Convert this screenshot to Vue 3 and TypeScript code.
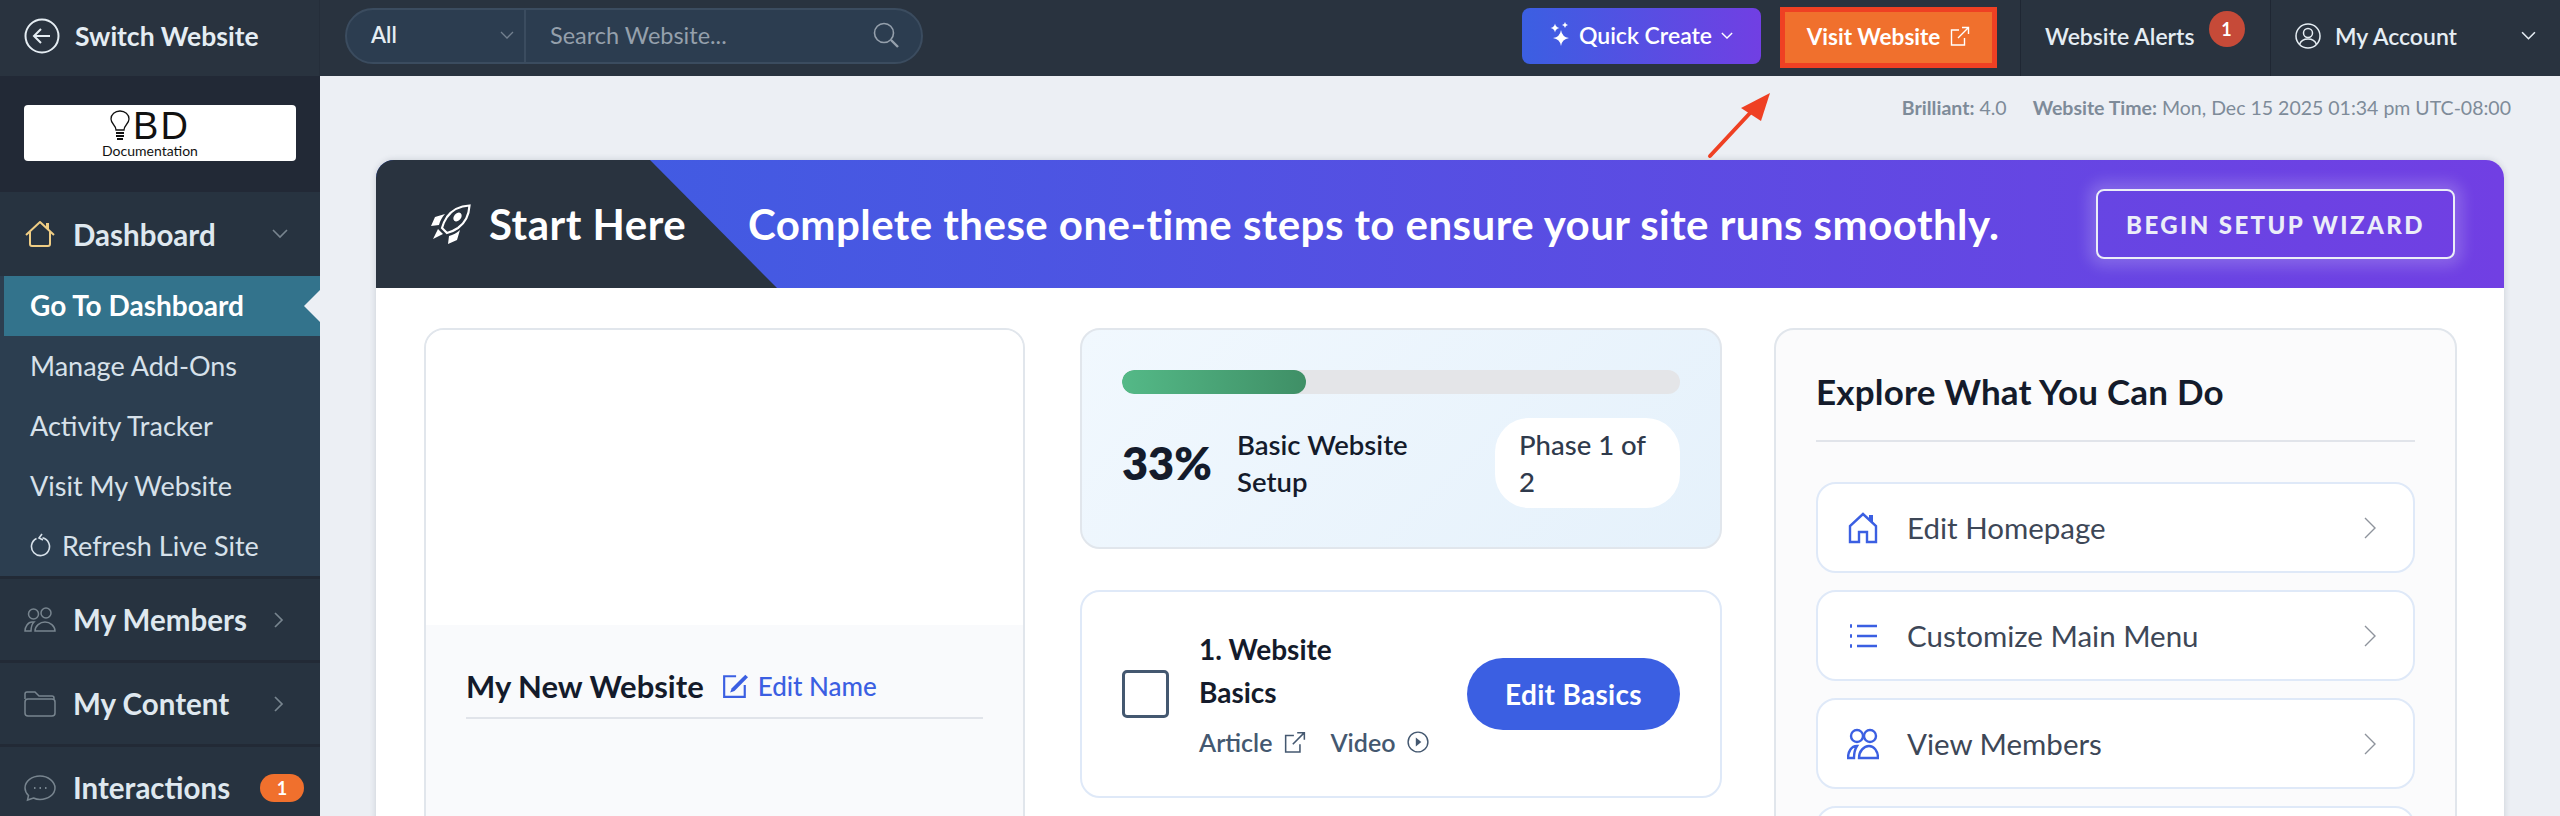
<script setup lang="ts">
interface SideGroup {
  label: string
  icon: string
  badge?: string
}

const subLinks = ['Manage Add-Ons', 'Activity Tracker', 'Visit My Website']
const groups: SideGroup[] = [
  { label: 'My Members', icon: 'members' },
  { label: 'My Content', icon: 'folder' },
  { label: 'Interactions', icon: 'chat', badge: '1' }
]
const explore = [
  { label: 'Edit Homepage', icon: 'home' },
  { label: 'Customize Main Menu', icon: 'list' },
  { label: 'View Members', icon: 'members' }
]
</script>

<template>
  <div class="page">
    <header class="topbar">
      <div class="switch">
        <svg class="switch-icon" viewBox="0 0 36 36" fill="none" stroke="currentColor" stroke-width="2">
          <circle cx="18" cy="18" r="16.5" />
          <path d="M26 18H10M17 11l-7 7 7 7" />
        </svg>
        <span>Switch Website</span>
      </div>
      <div class="search">
        <div class="search-type">
          <span>All</span>
          <svg class="chev-sm" viewBox="0 0 14 8" fill="none" stroke="currentColor" stroke-width="1.3"><path d="M1 1l6 6 6-6" /></svg>
        </div>
        <div class="search-input">
          <span>Search Website...</span>
          <svg class="search-icon" viewBox="0 0 26 26" fill="none" stroke="currentColor" stroke-width="1.6">
            <circle cx="11" cy="11" r="9.5" />
            <path d="M18 18l7 7" stroke-width="2.4" />
          </svg>
        </div>
      </div>
      <div class="top-actions">
        <button class="quick">
          <svg class="spark" viewBox="0 0 20 26" fill="currentColor">
            <path d="M11 8q1 7 8 8-7 1-8 8-1-7-8-8 7-1 8-8z" />
            <path d="M5 1.500q.6 3.900 4.500 4.500-3.900.6-4.500 4.500-.6-3.900-4.500-4.500 3.900-.6 4.500-4.500z" />
            <path d="M15 0q.4 2.600 3 3-2.600.4-3 3-.4-2.600-3-3 2.600-.4 3-3z" />
          </svg>
          <span>Quick Create</span>
          <svg class="chev-xs" viewBox="0 0 14 8" fill="none" stroke="currentColor" stroke-width="1.6"><path d="M1 1l6 6 6-6" /></svg>
        </button>
        <div class="visit-outline">
          <button class="visit">
            <span>Visit Website</span>
            <svg class="ext" viewBox="0 0 20 20" fill="none" stroke="currentColor" stroke-width="1.4">
              <path d="M9 4H1.500v15h13v-7M8 12L18.500 1.500M12 1.500h6.500V8" />
            </svg>
          </button>
        </div>
        <div class="alerts">
          <span>Website Alerts</span>
          <span class="alert-badge">1</span>
        </div>
        <div class="account">
          <svg class="user" viewBox="0 0 26 26" fill="none" stroke="currentColor" stroke-width="1.500">
            <circle cx="13" cy="13" r="12" />
            <circle cx="13" cy="10" r="4.500" />
            <path d="M4.500 21.500c1.500-4 4.500-5.500 8.500-5.500s7 1.500 8.500 5.500" />
          </svg>
          <span>My Account</span>
          <svg class="chev-acc" viewBox="0 0 14 8" fill="none" stroke="currentColor" stroke-width="1.500"><path d="M1 1l6 6 6-6" /></svg>
        </div>
      </div>
    </header>

    <div class="body">
      <aside class="sidebar">
        <div class="logo-wrap">
          <div class="logo">
            <div class="logo-mark">
              <svg class="bulb" viewBox="0 0 20 31" fill="none" stroke="#111" stroke-width="1.300">
                <path d="M6 20c0-5-5-6-5-11a9 8 0 0 1 18 0c0 5-5 6-5 11z" />
                <path d="M6 23h8M6 26h8M7 29h6" stroke-width="1.800" />
              </svg>
              <span class="logo-bd">BD</span>
            </div>
            <span class="logo-doc">Documentation</span>
          </div>
        </div>

        <div class="side-head">
          <svg class="home-gold" viewBox="0 0 30 27" fill="none" stroke="currentColor" stroke-width="2" stroke-linejoin="round">
            <path d="M1 14L15 1l14 13M5 11v12a2 2 0 0 0 2 2h16a2 2 0 0 0 2-2V11" />
            <path d="M21 2h3v8l-3-3z" fill="currentColor" stroke="none" />
          </svg>
          <span class="side-label">Dashboard</span>
          <svg class="side-chev-down" viewBox="0 0 16 10" fill="none" stroke="currentColor" stroke-width="1.600"><path d="M1 1l7 7 7-7" /></svg>
        </div>

        <nav class="sub">
          <a class="sub-link active">Go To Dashboard</a>
          <a v-for="link in subLinks" :key="link" class="sub-link">{{ link }}</a>
          <a class="sub-link">
            <svg class="refresh" viewBox="0 0 22 24" fill="none" stroke="currentColor" stroke-width="1.600">
              <path d="M6.500 5.500a9 9 0 1 0 6-.7M12 1l-3 4 4 2" />
            </svg>
            Refresh Live Site
          </a>
        </nav>

        <div v-for="group in groups" :key="group.label" class="side-group">
          <svg class="side-icon" viewBox="0 0 32 26" fill="none" stroke="currentColor" stroke-width="1.500">
            <template v-if="group.icon === 'members'">
              <circle cx="9.500" cy="7" r="5" />
              <circle cx="22" cy="6" r="5" />
              <path d="M1 24c0-4 3-9 7-9h2c-2 2-3 6-3 9zM11 24c0-5 5-9 10-9s10 4 10 9z" />
            </template>
            <template v-else-if="group.icon === 'folder'">
              <path d="M1 8V3a2 2 0 0 1 2-2h8l4 4h13a2 2 0 0 1 2 2v1" />
              <rect x="1" y="8" width="30" height="17" rx="3" />
            </template>
            <template v-else>
              <path d="M16 1C8 1 1 6 1 13c0 3 1.500 5.500 3.500 7.500L3.500 25l6-2c2 1 4 1.500 6.500 1.500 8 0 15-5 15-11.500S24 1 16 1z" />
              <path d="M10 13h1.500M15.500 13H17M21 13h1.500" stroke-width="2.200" />
            </template>
          </svg>
          <span class="side-label">{{ group.label }}</span>
          <span v-if="group.badge" class="side-badge">{{ group.badge }}</span>
          <svg v-else class="side-chev" viewBox="0 0 10 16" fill="none" stroke="currentColor" stroke-width="1.700"><path d="M1 1l7 7-7 7" /></svg>
        </div>
      </aside>

      <main class="main">
        <svg class="arrow" viewBox="0 0 70 70" fill="#ef4023">
          <path d="M5 66L46 22" stroke="#ef4023" stroke-width="4" stroke-linecap="round" />
          <path d="M65 3L56 31 36 18z" />
        </svg>

        <div class="meta">
          <span><b>Brilliant:</b> 4.0</span>
          <span><b>Website Time:</b> Mon, Dec 15 2025 01:34 pm UTC-08:00</span>
        </div>

        <section class="panel">
          <div class="banner">
            <div class="start">
              <svg class="rocket" viewBox="0 0 40 40" fill="#fff">
                <path d="M38.500 1.500C29 2 21 6 16 13c-2 3-4 7-5 11l5 5c4-1 8-3 11-5 7-5 11-13 11.500-22.500z" fill="none" stroke="#fff" stroke-width="2.200" />
                <ellipse cx="26.500" cy="13" rx="3.500" ry="5" transform="rotate(40 26.500 13)" />
                <path d="M14 10L4 13 0 22l8-1c1-4 3-8 6-11zM29 26l-3 10-9 4 1-8c4-1 8-3 11-6zM7 25l5 5-10 5z" />
              </svg>
              <span>Start Here</span>
            </div>
            <div class="banner-text">Complete these one-time steps to ensure your site runs smoothly.</div>
            <button class="wizard">BEGIN SETUP WIZARD</button>
          </div>

          <div class="columns">
            <div class="site-card">
              <div class="site-preview"></div>
              <div class="site-info">
                <div class="site-name">
                  <strong>My New Website</strong>
                  <svg class="edit-icon" viewBox="0 0 24 24" fill="none" stroke="currentColor" stroke-width="2">
                    <path d="M13 3H2v19h19V11" />
                    <path d="M21.500 1.500L9 14l-1.500 4 4-1.500L24 4z" fill="currentColor" stroke="none" />
                  </svg>
                  <span class="edit-name">Edit Name</span>
                </div>
              </div>
            </div>

            <div class="mid">
              <div class="progress-card">
                <div class="bar"><div class="bar-fill" :style="{ width: '33%' }"></div></div>
                <div class="progress-row">
                  <span class="pct">33%</span>
                  <span class="phase-name">Basic Website Setup</span>
                  <span class="phase-pill">Phase 1 of 2</span>
                </div>
              </div>

              <div class="step-card">
                <span class="check"></span>
                <div class="step-body">
                  <div class="step-title">1. Website Basics</div>
                  <div class="step-links">
                    <span>Article</span>
                    <svg class="ext small" viewBox="0 0 20 20" fill="none" stroke="currentColor" stroke-width="1.400">
                      <path d="M9 4H1.500v15h13v-7M8 12L18.500 1.500M12 1.500h6.500V8" />
                    </svg>
                    <span class="video">Video</span>
                    <svg class="play" viewBox="0 0 20 20" fill="none" stroke="currentColor" stroke-width="1.300">
                      <circle cx="10" cy="10" r="9" />
                      <path d="M8 6l5 4-5 4z" fill="currentColor" stroke="none" />
                    </svg>
                  </div>
                </div>
                <button class="edit-basics">Edit Basics</button>
              </div>
            </div>

            <div class="explore">
              <h3>Explore What You Can Do</h3>
              <a v-for="item in explore" :key="item.label" class="explore-row">
                <svg class="explore-icon" viewBox="0 0 32 32" fill="none" stroke="currentColor" stroke-width="2.400">
                  <template v-if="item.icon === 'home'">
                    <path d="M3 30V14L16 2l13 12v16h-9V20h-8v10z" />
                    <path d="M22 3h4v9l-4-4z" fill="currentColor" stroke="none" />
                  </template>
                  <template v-else-if="item.icon === 'list'">
                    <path d="M10 6h20M10 16h20M10 26h20" />
                    <path d="M3 6h2M3 16h2M3 26h2" stroke-width="3.400" />
                  </template>
                  <template v-else>
                    <circle cx="10" cy="8" r="6" />
                    <circle cx="23" cy="8" r="6" />
                    <path d="M1 30c0-6 3-12 9-12-2 3-3 8-3 12zM12 30c0-7 5-12 10-12s9 5 9 12z" />
                  </template>
                </svg>
                <span>{{ item.label }}</span>
                <svg class="row-chev" viewBox="0 0 12 22" fill="none" stroke="currentColor" stroke-width="1.400"><path d="M1 1l10 10L1 21" /></svg>
              </a>
              <div class="explore-row"></div>
            </div>
          </div>
        </section>
      </main>
    </div>
  </div>
</template>

<style>
html,
body {
  margin: 0;
  background: #eceff4;
}
</style>

<style scoped>
* {
  box-sizing: border-box;
}

.page {
  width: 2560px;
  height: 816px;
  overflow: hidden;
  display: flex;
  flex-direction: column;
  font-family: Lato, "Open Sans", sans-serif;
  color: #141b2b;
}

button {
  border: none;
  font-family: inherit;
  color: #fff;
}

/* top bar */
.topbar {
  flex: 0 0 76px;
  display: flex;
  align-items: center;
  background: #29333f;
  color: #e5edf3;
}

.switch {
  flex: 0 0 320px;
  height: 100%;
  display: flex;
  align-items: center;
  gap: 15px;
  padding: 0 0 5px 24px;
  border-right: 1px solid #252e3a;
  font-size: 26.5px;
  font-weight: 700;
}

.switch-icon {
  width: 36px;
  height: 36px;
}

.search {
  margin: 0 0 5px 25px;
  width: 578px;
  height: 56px;
  display: flex;
  background: #2c3d50;
  border: 2px solid #3b4c5f;
  border-radius: 28px;
}

.search-type {
  flex: 0 0 179px;
  display: flex;
  align-items: center;
  justify-content: space-between;
  padding: 0 10px 2px 24px;
  border-right: 2px solid #3b4c5f;
  font-size: 22px;
  font-weight: 600;
}

.chev-sm {
  width: 14px;
  height: 8px;
  color: #73808f;
}

.search-input {
  flex: 1;
  display: flex;
  align-items: center;
  justify-content: space-between;
  padding: 0 22px 2px 24px;
  font-size: 23.5px;
  color: #95a0ac;
}

.search-icon {
  width: 26px;
  height: 26px;
}

.top-actions {
  margin-left: auto;
  height: 100%;
  display: flex;
  align-items: center;
}

.quick {
  width: 239px;
  height: 56px;
  margin-bottom: 4px;
  display: flex;
  align-items: center;
  justify-content: center;
  gap: 9px;
  padding: 0 0 2px;
  border-radius: 8px;
  background: linear-gradient(90deg, #3b5fe2, #713fe3);
  font-size: 23px;
  font-weight: 600;
}

.spark {
  width: 20px;
  height: 26px;
}

.chev-xs {
  width: 12px;
  height: 7px;
}

.visit-outline {
  margin: 0 0 1px 19px;
  width: 217px;
  height: 61px;
  padding: 5px;
  background: #ef4023;
}

.visit {
  width: 100%;
  height: 100%;
  display: flex;
  align-items: center;
  justify-content: center;
  gap: 10px;
  padding: 0 0 3px;
  background: #f0702d;
  font-size: 22.5px;
  font-weight: 700;
}

.ext {
  width: 20px;
  height: 20px;
}

.alerts {
  margin-left: 23px;
  width: 251px;
  height: 100%;
  display: flex;
  align-items: center;
  padding: 0 0 5px 24px;
  gap: 14px;
  border-left: 1px solid #1f2733;
  border-right: 1px solid #1f2733;
  font-size: 23px;
  font-weight: 600;
}

.alert-badge {
  width: 36px;
  height: 36px;
  margin-top: -13px;
  display: flex;
  align-items: center;
  justify-content: center;
  border-radius: 50%;
  background: #c64a38;
  font-size: 18px;
  font-weight: 700;
  color: #fff;
}

.account {
  width: 289px;
  height: 100%;
  display: flex;
  align-items: center;
  padding: 0 0 5px 24px;
  gap: 14px;
  font-size: 23px;
  font-weight: 600;
}

.user {
  width: 26px;
  height: 26px;
}

.chev-acc {
  width: 15px;
  height: 9px;
  margin-left: 50px;
}

/* sidebar */
.body {
  flex: 1;
  display: flex;
  min-height: 0;
}

.sidebar {
  flex: 0 0 320px;
  background: #273340;
  color: #dfe8ef;
}

.logo-wrap {
  height: 116px;
  padding: 29px 24px 0;
  background: #222936;
}

.logo {
  height: 56px;
  display: flex;
  flex-direction: column;
  align-items: center;
  background: #fff;
  border-radius: 4px;
  color: #111;
  padding: 5px 20px 0 0;
}

.logo-mark {
  display: flex;
  align-items: flex-end;
  height: 31px;
}

.bulb {
  width: 20px;
  height: 31px;
}

.logo-bd {
  margin-left: 3px;
  font-family: "Liberation Sans", sans-serif;
  font-size: 38px;
  line-height: 30px;
  letter-spacing: 2px;
}

.logo-doc {
  margin-top: 2px;
  font-size: 14px;
  line-height: 15px;
}

.side-head {
  height: 84px;
  display: flex;
  align-items: center;
  padding: 0 32px 0 25px;
}

.side-icon {
  width: 32px;
  height: 28px;
  color: #78858f;
}

.home-gold {
  width: 30px;
  height: 27px;
  color: #efcd84;
}

.side-label {
  margin-left: 18px;
  font-size: 29.5px;
  font-weight: 700;
}

.side-chev-down {
  margin-left: auto;
  width: 16px;
  height: 10px;
  color: #78858f;
}

.sub {
  background: #2c3e50;
}

.sub-link {
  display: flex;
  align-items: center;
  gap: 10px;
  height: 60px;
  padding: 0 0 2px 30px;
  font-size: 27px;
  color: #d7e1ea;
}

.sub-link.active {
  position: relative;
  margin-left: 4px;
  padding-left: 26px;
  background: #33738c;
  color: #fff;
  font-size: 28px;
  font-weight: 700;
}

.sub-link.active::after {
  content: "";
  position: absolute;
  right: 0;
  top: 14px;
  border: 16px solid transparent;
  border-left-width: 0;
  border-right-width: 16px;
  border-right-color: #eceff4;
}

.refresh {
  width: 22px;
  height: 24px;
}

.side-group {
  height: 84px;
  display: flex;
  align-items: center;
  padding: 0 16px 0 24px;
  border-top: 3px solid #222a36;
}

.side-group .side-label {
  flex: 1;
  margin-left: 17px;
}

.side-chev {
  width: 10px;
  height: 16px;
  margin-right: 20px;
  color: #78858f;
}

.side-badge {
  width: 44px;
  height: 28px;
  display: flex;
  align-items: center;
  justify-content: center;
  border-radius: 14px;
  background: #f0702d;
  font-size: 18px;
  font-weight: 700;
  color: #fff;
}

/* main */
.main {
  position: relative;
  flex: 1;
  padding: 0 56px;
  min-width: 0;
}

.arrow {
  position: absolute;
  left: 1385px;
  top: 14px;
  width: 70px;
  height: 70px;
}

.meta {
  height: 84px;
  display: flex;
  justify-content: flex-end;
  align-items: flex-start;
  gap: 26px;
  margin-right: -7px;
  padding-top: 20px;
  font-size: 19.5px;
  line-height: 24px;
  color: #7e8b99;
}

.meta b {
  font-weight: 700;
}

.panel {
  height: 700px;
  background: #fff;
  border-radius: 18px 18px 0 0;
  box-shadow: 0 0 6px rgba(60, 70, 90, 0.2);
  overflow: hidden;
}

.banner {
  height: 128px;
  display: flex;
  align-items: center;
  background: linear-gradient(90deg, #3b5fe2, #713fe3);
}

.start {
  flex: 0 0 401px;
  height: 100%;
  display: flex;
  align-items: center;
  gap: 17px;
  padding-left: 54px;
  background: #29333f;
  clip-path: polygon(0 0, 274px 0, 100% 100%, 0 100%);
  color: #fff;
  font-size: 42px;
  font-weight: 700;
  letter-spacing: 0.5px;
}

.rocket {
  width: 42px;
  height: 40px;
}

.banner-text {
  margin-left: -29px;
  font-size: 42px;
  font-weight: 700;
  letter-spacing: 0.45px;
  color: #fff;
  white-space: nowrap;
}

.wizard {
  margin-left: auto;
  margin-right: 49px;
  width: 359px;
  height: 70px;
  background: transparent;
  border: 2px solid #ebeef8;
  border-radius: 8px;
  box-shadow: 0 0 14px 8px rgba(255, 255, 255, 0.18);
  font-size: 24px;
  font-weight: 900;
  letter-spacing: 2.4px;
  color: #ebeef8;
}

.columns {
  display: flex;
  align-items: flex-start;
  padding: 40px 48px 0;
}

.site-card {
  flex: 0 0 601px;
  height: 700px;
  border: 2px solid #e1e6ec;
  border-radius: 20px;
  overflow: hidden;
  background: #f9fafc;
}

.site-preview {
  height: 295px;
  background: #fff;
}

.site-info {
  padding: 36px 40px 0;
}

.site-name {
  display: flex;
  align-items: center;
  height: 58px;
  padding-bottom: 6px;
  border-bottom: 2px solid #e1e4ea;
}

.site-name strong {
  font-size: 31px;
  font-weight: 700;
}

.edit-icon {
  width: 26px;
  height: 26px;
  margin-left: 18px;
  color: #3b5fe2;
}

.edit-name {
  margin-left: 10px;
  font-size: 26px;
  font-weight: 500;
  color: #3b5fe2;
}

.mid {
  flex: 0 0 640px;
  margin-left: 55px;
  display: flex;
  flex-direction: column;
  gap: 41px;
}

.progress-card {
  height: 221px;
  padding: 40px 40px 0;
  border: 2px solid #e1e6ec;
  border-radius: 20px;
  background: linear-gradient(135deg, #f1f8fe, #e5f1fb);
}

.bar {
  height: 24px;
  border-radius: 12px;
  background: #e4e5e8;
  overflow: hidden;
}

.bar-fill {
  height: 100%;
  border-radius: 12px;
  background: linear-gradient(90deg, #54b987, #3f8f66);
}

.progress-row {
  display: flex;
  align-items: center;
  margin-top: 24px;
}

.pct {
  flex: 0 0 115px;
  font-size: 45px;
  font-weight: 800;
}

.phase-name {
  flex: 0 0 258px;
  padding-right: 60px;
  font-size: 27.5px;
  line-height: 37px;
  font-weight: 600;
}

.phase-pill {
  flex: 0 0 185px;
  height: 90px;
  padding: 8px 24px;
  border-radius: 34px;
  background: #fff;
  font-size: 27.5px;
  line-height: 37px;
  font-weight: 500;
  color: #2f3a4c;
}

.step-card {
  height: 208px;
  display: flex;
  align-items: center;
  padding: 0 40px;
  border: 2px solid #dfe9f8;
  border-radius: 20px;
  background: #fff;
}

.check {
  flex: 0 0 47px;
  height: 48px;
  border: 3px solid #445870;
  border-radius: 5px;
}

.step-body {
  flex: 1;
  margin-left: 30px;
}

.step-title {
  width: 190px;
  margin-top: -4px;
  font-size: 28px;
  line-height: 43px;
  font-weight: 700;
}

.step-links {
  display: flex;
  align-items: center;
  margin-top: 13px;
  font-size: 25px;
  font-weight: 600;
  color: #445870;
}

.ext.small {
  width: 22px;
  height: 22px;
  margin-left: 12px;
  color: #445870;
}

.video {
  margin-left: 24px;
}

.play {
  width: 22px;
  height: 22px;
  margin-left: 12px;
}

.edit-basics {
  flex: 0 0 213px;
  height: 72px;
  border-radius: 36px;
  background: #3b5fe2;
  font-size: 28px;
  font-weight: 700;
  letter-spacing: 0.3px;
}

.explore {
  flex: 0 0 683px;
  margin-left: 52px;
  height: 700px;
  padding: 0 40px;
  border: 2px solid #e1e6ec;
  border-radius: 20px;
  background: #fbfbfc;
}

.explore h3 {
  margin: 0 0 40px;
  padding: 40px 0 27px;
  border-bottom: 2px solid #e1e4ea;
  font-size: 35px;
  line-height: 43px;
  font-weight: 700;
  letter-spacing: 0.2px;
}

.explore-row {
  height: 91px;
  margin-bottom: 17px;
  display: flex;
  align-items: center;
  padding: 0 37px 0 29px;
  border: 2px solid #dfe9f8;
  border-radius: 20px;
  background: #fff;
  font-size: 29.5px;
  color: #3d4757;
}

.explore-icon {
  width: 32px;
  height: 32px;
  margin-right: 28px;
  color: #3b5fe2;
}

.row-chev {
  margin-left: auto;
  width: 12px;
  height: 22px;
  color: #8e939c;
}
</style>
